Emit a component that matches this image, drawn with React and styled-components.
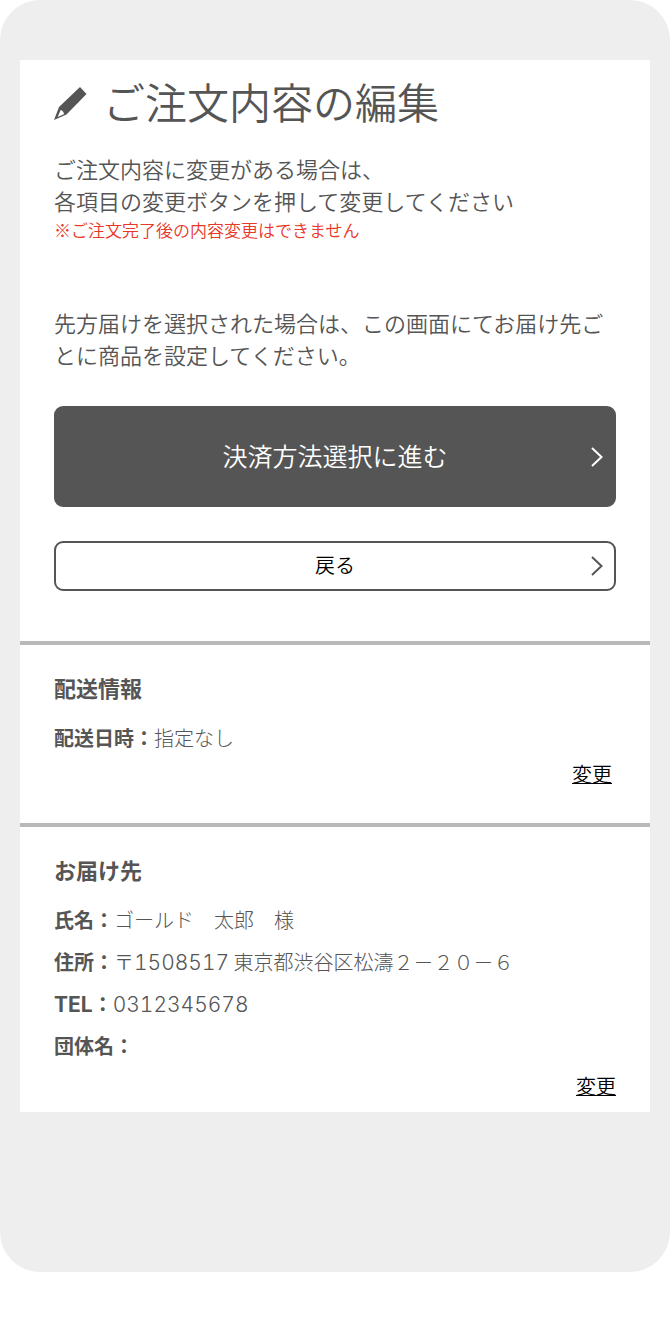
import React from "react";
import styled, { createGlobalStyle } from "styled-components";

const GlobalStyle = createGlobalStyle`
    body {
        margin: 0;
        background-color: #fff;
        color: #555;
        font-family: "Noto Sans CJK JP", sans-serif;
        font-size: 20px;
        font-weight: 350;
    }
    *, *::before, *::after {
        box-sizing: border-box;
    }
`;

const Screen = styled.main`
    padding: 60px 20px 160px;
    border-radius: 40px;
    background-color: #eee;
`;

const Panel = styled.div`
    background-color: #fff;
`;

const Intro = styled.section`
    padding: 10px 34px 50px;
`;

const Title = styled.h1`
    display: flex;
    align-items: center;
    gap: 15px;
    margin: 0 0 20px;
    font-size: 42px;
    font-weight: 350;
    line-height: 62px;
`;

const Text = styled.p`
    margin: 0;
    font-size: 22px;
    line-height: 32px;
`;

const Notice = styled.p`
    margin: 0 0 62px;
    color: #e83828;
    font-size: 17px;
    line-height: 28px;
`;

const Actions = styled.div`
    display: flex;
    flex-direction: column;
    gap: 34px;
    margin-top: 36px;
`;

const Button = styled.button`
    display: grid;
    grid-template-columns: 16px 1fr 16px;
    align-items: center;
    width: 100%;
    height: ${props => (props.$primary ? "101px" : "50px")};
    padding: 0 8px;
    border: 2px solid #555;
    border-radius: 9px;
    background-color: ${props => (props.$primary ? "#555" : "#fff")};
    color: ${props => (props.$primary ? "#fff" : "#000")};
    font-family: inherit;
    font-size: ${props => (props.$primary ? "25px" : "20px")};
    font-weight: 350;
    cursor: pointer;
    span {
        grid-column: 2;
        margin-bottom: 4px;
    }
    svg {
        color: ${props => (props.$primary ? "#fff" : "#555")};
    }
`;

const Section = styled.section`
    padding: 26px 34px ${props => (props.$last ? "11px" : "34px")};
    border-top: 4px solid #b9b9b9;
`;

const Heading = styled.h2`
    margin: 0 0 14px;
    font-size: 22px;
    font-weight: 700;
    line-height: 32px;
`;

const List = styled.dl`
    margin: 0;
`;

const Row = styled.div`
    display: flex;
    line-height: 42px;
    dt {
        font-weight: 700;
    }
    dd {
        margin: 0;
        font-weight: 300;
    }
`;

const Latin = styled.span`
    font-family: Inter, "Liberation Sans", sans-serif;
    font-size: 21px;
    font-variant-numeric: tabular-nums;
    line-height: 20px;
`;

const LinkRow = styled.div`
    display: flex;
    justify-content: flex-end;
    padding: ${props => (props.$last ? "4px 0 0" : "0 4px 0 0")};
    line-height: 30px;
`;

const ChangeLink = styled.a`
    color: #000;
    text-decoration: underline;
    text-decoration-thickness: 1px;
`;

const PencilIcon = () => (
    <svg width="34" height="40" viewBox="0 0 34 40" aria-hidden="true">
        <path
            fill="#555"
            fillRule="evenodd"
            d="M26 6 L32.500 13 L12.500 33.500 L0 39 L5 26 Z M6.800 28.800 L3.700 36 L10.200 33 L9 30.500 Z"
        />
    </svg>
);

const ArrowIcon = () => (
    <svg width="14" height="22" viewBox="0 0 14 22" aria-hidden="true">
        <path d="M2 2 L11.5 11 L2 20" fill="none" stroke="currentColor" strokeWidth="2" />
    </svg>
);

const delivery = [
    { label: "配送日時：", value: "指定なし" }
];

const address = [
    { label: "氏名：", value: "ゴールド　太郎　様" },
    {
        label: "住所：",
        value: <>〒<Latin>1508517</Latin> 東京都渋谷区松濤２－２０－６</>
    },
    { label: <><Latin>TEL</Latin>：</>, value: <Latin>0312345678</Latin> },
    { label: "団体名：", value: "" }
];

const InfoSection = ({ title, items, last }) => (
    <Section $last={last}>
        <Heading>{title}</Heading>
        <List>
            {items.map((item, i) => (
                <Row key={i}>
                    <dt>{item.label}</dt>
                    <dd>{item.value}</dd>
                </Row>
            ))}
        </List>
        <LinkRow $last={last}>
            <ChangeLink href="#" aria-label={`${title}を変更`}>変更</ChangeLink>
        </LinkRow>
    </Section>
);

const App = () => (
    <>
        <GlobalStyle />
        <Screen lang="ja">
            <Panel>
                <Intro>
                    <Title>
                        <PencilIcon />
                        ご注文内容の編集
                    </Title>
                    <Text>
                        ご注文内容に変更がある場合は、
                        <br />
                        各項目の変更ボタンを押して変更してください
                    </Text>
                    <Notice>※ご注文完了後の内容変更はできません</Notice>
                    <Text>
                        先方届けを選択された場合は、この画面にてお届け先ごとに商品を設定してください。
                    </Text>
                    <Actions>
                        <Button type="button" $primary>
                            <span>決済方法選択に進む</span>
                            <ArrowIcon />
                        </Button>
                        <Button type="button">
                            <span>戻る</span>
                            <ArrowIcon />
                        </Button>
                    </Actions>
                </Intro>
                <InfoSection title="配送情報" items={delivery} />
                <InfoSection title="お届け先" items={address} last />
            </Panel>
        </Screen>
    </>
);

export default App;
